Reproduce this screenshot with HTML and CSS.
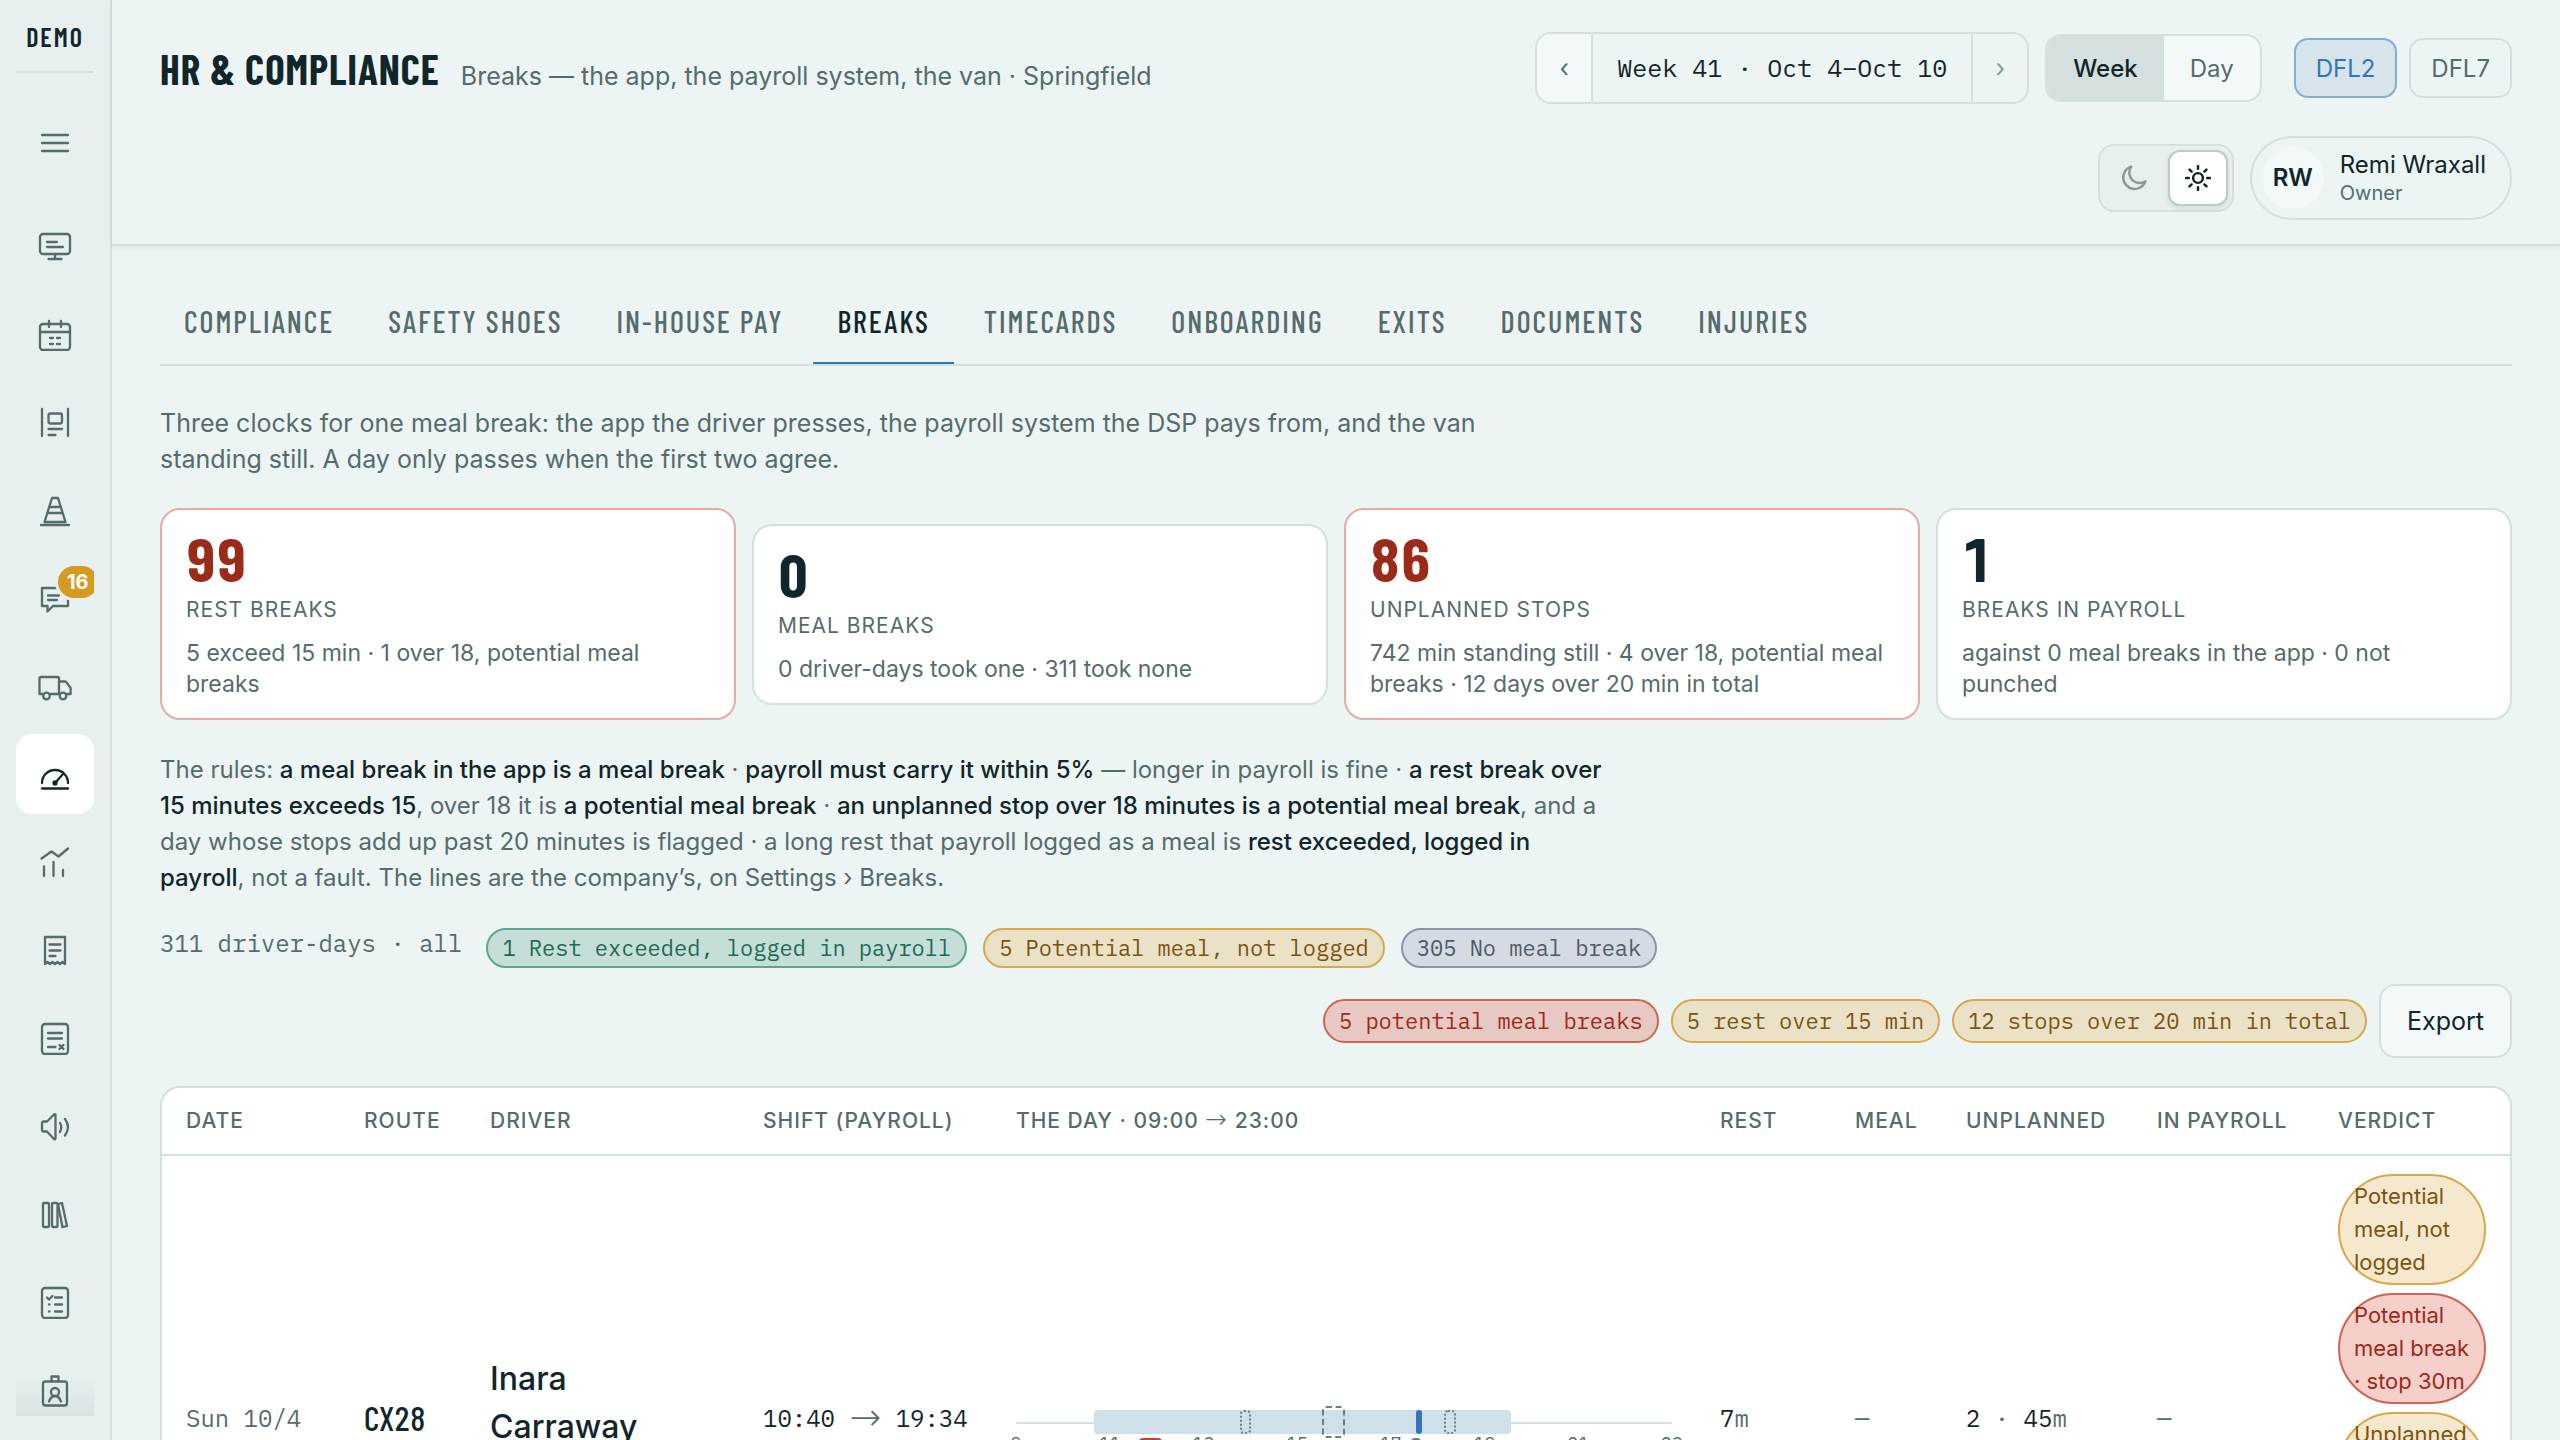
FILE: index.html
```html
<!DOCTYPE html>
<html lang="en">
<head>
  <meta charset="UTF-8">
  <title>HR &amp; Compliance - Breaks</title>
  <link rel="stylesheet" href="styles.css">
</head>
<body>
<div class="app">

  <aside class="sidebar">
    <div class="brand">DEMO</div>
    <button class="menu-btn" type="button" aria-label="Menu">
      <svg viewBox="0 0 34 34"><path d="M4 9h26M4 17h26M4 25h26"/></svg>
    </button>
    <nav class="nav">
      <a href="#" class="nav-item" aria-label="Dispatch">
        <svg viewBox="0 0 34 34"><rect x="2" y="5" width="30" height="20" rx="3"/><path d="M9 13h10M9 18h16M17 25v5M10.500 30h13"/></svg>
      </a>
      <a href="#" class="nav-item" aria-label="Schedule">
        <svg viewBox="0 0 34 34"><rect x="2" y="7" width="30" height="26" rx="3"/><path d="M2 15h30M11 4v6M23 4v6M12 21h3M19 21h3M12 27h3M19 27h3"/></svg>
      </a>
      <a href="#" class="nav-item" aria-label="Standup">
        <svg viewBox="0 0 34 34"><path d="M4 4v27M30 4v27"/><rect x="10.500" y="8.500" width="13.500" height="10" rx="2"/><path d="M10.500 24H24M10.500 30h7"/></svg>
      </a>
      <a href="#" class="nav-item" aria-label="Safety">
        <svg viewBox="0 0 34 34"><path d="M14 5h6l7.500 24h-21zM11.500 14h11M9.500 20h15M3 32h28"/></svg>
      </a>
      <a href="#" class="nav-item" aria-label="Messages, 16 unread">
        <svg viewBox="0 0 34 34"><path d="M4 7h26v18H15l-5.500 5.500V25H4zM10 14.500h11M10 19h9"/></svg>
        <span class="nav-badge">16</span>
      </a>
      <a href="#" class="nav-item" aria-label="Fleet">
        <svg viewBox="0 0 34 34"><path d="M5 25H1.500V9.500q0-1.500 1.500-1.500h16.500q1.500 0 1.500 1.500V25M11.500 25h10M21 12.500h6q1 0 1.600 1l4 5.500v6H29"/><circle cx="8.500" cy="27" r="3.300"/><circle cx="25" cy="27" r="3.300"/></svg>
      </a>
      <a href="#" class="nav-item active" aria-label="HR &amp; Compliance">
        <svg viewBox="0 0 34 34"><path d="M4 26a13 13 0 0 1 26 0M4 31.500h26M17 26l8-9"/><circle class="dot" cx="17" cy="26" r="1.500"/></svg>
      </a>
      <a href="#" class="nav-item" aria-label="Performance">
        <svg viewBox="0 0 34 34"><path d="M3.500 13.500l10-7 7 5L30 3.500M6 21.500V31M15.500 17v14M25 25v6"/></svg>
      </a>
      <a href="#" class="nav-item" aria-label="Invoices">
        <svg viewBox="0 0 34 34"><path d="M7 31V4h20v27l-2.500-2-2.500 2-2.500-2-2.500 2-2.500-2-2.500 2-2.500-2zM11.500 11.500h11M11.500 17.500h11M11.500 23h6"/></svg>
      </a>
      <a href="#" class="nav-item" aria-label="Disputes">
        <svg viewBox="0 0 34 34"><rect x="4" y="3" width="26" height="30" rx="3"/><path d="M10 12h14M10 17.500h14M10 26h7.500M21.500 24l4 4M25.500 24l-4 4"/></svg>
      </a>
      <a href="#" class="nav-item" aria-label="Announcements">
        <svg viewBox="0 0 34 34"><path d="M6 12.500h3l7-7q1.500-1 1.500 1v22.500q0 2-1.500 1l-7-7.500H6q-2 0-2-2v-6q0-2 2-2zM22 14q2.500 4 0 9M27 10q6 8 0 16.500"/></svg>
      </a>
      <a href="#" class="nav-item" aria-label="Library">
        <svg viewBox="0 0 34 34"><rect x="5" y="6" width="6" height="24" rx="1"/><rect x="14" y="6" width="5.500" height="24" rx="1"/><path d="M20 7l4-1 5 23-4.500 1.200z"/></svg>
      </a>
      <a href="#" class="nav-item" aria-label="Tasks">
        <svg viewBox="0 0 34 34"><rect x="4" y="3" width="26" height="30" rx="3"/><path d="M9 12.500l2 2 3.500-3.500M17 12.500h7M17 19.500h7M17 26.500h7M11 19.500h.5M11 26.500h.5"/></svg>
      </a>
      <a href="#" class="nav-item" aria-label="Staff">
        <svg viewBox="0 0 34 34"><rect x="5" y="8.500" width="24" height="24" rx="2.500"/><path d="M13.500 8V3.500h7V8M11 28.500q2-5.500 6-5.500t6 5.500"/><circle cx="17" cy="19" r="4"/></svg>
      </a>
    </nav>
  </aside>

  <div class="page">
    <header class="topbar">
      <div class="heading">
        <h1>HR &amp; COMPLIANCE</h1>
        <p>Breaks — the app, the payroll system, the van · Springfield</p>
      </div>
      <div class="tools">
        <div class="stepper">
          <button type="button" aria-label="Previous week">‹</button>
          <span class="stepper-label">Week 41 · Oct 4–Oct 10</span>
          <button type="button" class="faded" aria-label="Next week">›</button>
        </div>
        <div class="segment">
          <button type="button" class="on">Week</button>
          <button type="button">Day</button>
        </div>
        <div class="stations">
          <button type="button" class="on">DFL2</button>
          <button type="button">DFL7</button>
        </div>
        <div class="theme">
          <button type="button" aria-label="Dark theme">
            <svg viewBox="0 0 24 24"><path d="M9.500 1.500a10.500 10.500 0 1 0 13 13.500A9.500 9.500 0 0 1 9.500 1.500z"/></svg>
          </button>
          <button type="button" class="on" aria-label="Light theme">
            <svg viewBox="0 0 24 24"><circle cx="12" cy="12" r="4.500"/><path d="M12 1v2.500M12 20.500V23M1 12h2.500M20.500 12H23M4.200 4.200L6 6M18 18l1.800 1.800M4.200 19.800L6 18M18 6l1.800-1.800"/></svg>
          </button>
        </div>
        <button type="button" class="profile">
          <span class="avatar">RW</span>
          <span class="profile-text">
            <span class="profile-name">Remi Wraxall</span>
            <span class="profile-role">Owner</span>
          </span>
        </button>
      </div>
    </header>

    <main class="content">
      <nav class="tabs">
        <a href="#">COMPLIANCE</a>
        <a href="#">SAFETY SHOES</a>
        <a href="#">IN-HOUSE PAY</a>
        <a href="#" class="active">BREAKS</a>
        <a href="#">TIMECARDS</a>
        <a href="#">ONBOARDING</a>
        <a href="#">EXITS</a>
        <a href="#">DOCUMENTS</a>
        <a href="#">INJURIES</a>
      </nav>

      <p class="intro">Three clocks for one meal break: the app the driver presses, the payroll system the DSP pays from, and the van standing still. A day only passes when the first two agree.</p>

      <section class="cards">
        <div class="card alert">
          <div class="card-value">99</div>
          <div class="card-label">REST BREAKS</div>
          <div class="card-note">5 exceed 15 min · 1 over 18, potential meal breaks</div>
        </div>
        <div class="card">
          <div class="card-value">0</div>
          <div class="card-label">MEAL BREAKS</div>
          <div class="card-note">0 driver-days took one · 311 took none</div>
        </div>
        <div class="card alert">
          <div class="card-value">86</div>
          <div class="card-label">UNPLANNED STOPS</div>
          <div class="card-note">742 min standing still · 4 over 18, potential meal breaks · 12 days over 20 min in total</div>
        </div>
        <div class="card">
          <div class="card-value">1</div>
          <div class="card-label">BREAKS IN PAYROLL</div>
          <div class="card-note">against 0 meal breaks in the app · 0 not punched</div>
        </div>
      </section>

      <p class="rules">The rules: <b>a meal break in the app is a meal break</b> · <b>payroll must carry it within 5%</b> — longer in payroll is fine · <b>a rest break over 15 minutes exceeds 15</b>, over 18 it is <b>a potential meal break</b> · <b>an unplanned stop over 18 minutes is a potential meal break</b>, and a day whose stops add up past 20 minutes is flagged · a long rest that payroll logged as a meal is <b>rest exceeded, logged in payroll</b>, not a fault. The lines are the company’s, on Settings › Breaks.</p>

      <div class="filters">
        <span class="count">311 driver-days · all</span>
        <button type="button" class="chip green">1 Rest exceeded, logged in payroll</button>
        <button type="button" class="chip amber">5 Potential meal, not logged</button>
        <button type="button" class="chip slate">305 No meal break</button>
      </div>
      <div class="flags">
        <span class="chip tall red">5 potential meal breaks</span>
        <span class="chip tall amber">5 rest over 15 min</span>
        <span class="chip tall amber">12 stops over 20 min in total</span>
        <button type="button" class="export">Export</button>
      </div>

      <div class="table-wrap">
        <table>
          <colgroup>
            <col class="c-date"><col class="c-route"><col class="c-driver"><col class="c-shift"><col>
            <col class="c-rest"><col class="c-meal"><col class="c-unplanned"><col class="c-payroll"><col class="c-verdict">
          </colgroup>
          <thead>
            <tr>
              <th>DATE</th>
              <th>ROUTE</th>
              <th>DRIVER</th>
              <th>SHIFT (PAYROLL)</th>
              <th>THE DAY · 09:00 <span class="arrow">→</span> 23:00</th>
              <th>REST</th>
              <th>MEAL</th>
              <th>UNPLANNED</th>
              <th>IN PAYROLL</th>
              <th>VERDICT</th>
            </tr>
          </thead>
          <tbody>
            <tr>
              <td class="mono muted">Sun 10/4</td>
              <td class="route">CX28</td>
              <td class="driver"><div>Inara Carraway</div></td>
              <td class="mono shift">10:40 <span class="arrow">→</span> 19:34</td>
              <td>
                <div class="day">
                  <div class="axis"></div>
                  <div class="worked" style="left: 11.9%; width: 63.6%"></div>
                  <div class="stop" style="left: 34.2%; width: 1.7%"></div>
                  <div class="stop long" style="left: 46.7%; width: 3.5%"></div>
                  <div class="rest" style="left: 61%; width: 0.9%"></div>
                  <div class="stop" style="left: 65.3%; width: 1.7%"></div>
                  <div class="mark bad" style="left: 18.8%; width: 3.4%"></div>
                  <div class="mark" style="left: 60.2%; width: 1.6%"></div>
                  <div class="hours">
                    <span>9</span><span>11</span><span>13</span><span>15</span><span>17</span><span>19</span><span>21</span><span>23</span>
                  </div>
                </div>
              </td>
              <td class="mono">7<span class="muted">m</span></td>
              <td class="mono muted">—</td>
              <td class="mono">2 <span class="muted">·</span> 45<span class="muted">m</span></td>
              <td class="mono muted">—</td>
              <td>
                <div class="verdicts">
                  <span class="verdict amber">Potential meal, not logged</span>
                  <span class="verdict red">Potential meal break · stop 30m</span>
                  <span class="verdict amber">Unplanned over 20 min</span>
                </div>
              </td>
            </tr>
          </tbody>
        </table>
      </div>
    </main>
  </div>
</div>
</body>
</html>
```
FILE: styles.css
```css
:root {
  --bg: #ecf4f4;
  --side: #e7efef;
  --raised: #f3f8f9;
  --line: #d3e0df;
  --ink: #10262a;
  --muted: #566b6d;
  --blue: #2f76b7;
  --red: #9c2a18;
  --sans: Inter, "Noto Sans", sans-serif;
  --cond: "Barlow Condensed", "Liberation Sans Narrow", "Roboto Condensed", sans-serif;
  --mono: "IBM Plex Mono", "Liberation Mono", monospace;
}

* {
  box-sizing: border-box;
}

body {
  margin: 0;
  background: var(--bg);
  color: var(--ink);
  font-family: var(--sans);
  font-size: 25px;
}

h1, p {
  margin: 0;
}

button {
  font: inherit;
  color: inherit;
  background: none;
  border: none;
  padding: 0;
  cursor: pointer;
}

a {
  color: inherit;
  text-decoration: none;
}

svg {
  display: block;
  fill: none;
  stroke: currentColor;
  stroke-width: 2.3;
  stroke-linecap: round;
  stroke-linejoin: round;
}

.app {
  display: flex;
  height: 100vh;
  overflow: hidden;
}

/* sidebar */
.sidebar {
  flex: none;
  display: flex;
  flex-direction: column;
  width: 112px;
  padding: 0 16px 24px;
  background: var(--side);
  border-right: 2px solid var(--line);
  color: var(--muted);
}

.brand {
  flex: none;
  height: 73px;
  border-bottom: 2px solid var(--line);
  color: var(--ink);
  font-family: var(--cond);
  font-size: 26px;
  font-weight: 600;
  letter-spacing: 2px;
  line-height: 73px;
  text-align: center;
}

.menu-btn {
  flex: none;
  display: flex;
  align-items: center;
  justify-content: center;
  height: 80px;
  margin: 30px 0 23px;
}

.menu-btn svg,
.nav-item svg {
  width: 34px;
  height: 34px;
}

.nav {
  position: relative;
  flex: 1;
  display: flex;
  flex-direction: column;
  gap: 8px;
  min-height: 0;
  overflow: hidden;
}

/* fade that shows there is more below */
.nav::after {
  content: "";
  position: absolute;
  left: 0;
  right: 0;
  bottom: 0;
  height: 40px;
  background: linear-gradient(rgba(16, 38, 42, 0), rgba(16, 38, 42, 0.06));
}

.nav-item {
  position: relative;
  flex: none;
  display: flex;
  align-items: center;
  justify-content: center;
  height: 80px;
  border-radius: 16px;
}

.nav-item.active {
  background: #fff;
  color: var(--ink);
}

.nav-item .dot {
  fill: currentColor;
}

.nav-badge {
  position: absolute;
  top: 8px;
  left: 42px;
  padding: 0 9px;
  border-radius: 16px;
  background: #d69a22;
  box-shadow: 0 0 0 3px var(--side);
  color: #fff;
  font-size: 20px;
  font-weight: bold;
  line-height: 32px;
}

/* top bar */
.page {
  flex: 1;
  min-width: 0;
}

.topbar {
  display: flex;
  justify-content: space-between;
  align-items: flex-start;
  padding: 32px 48px 24px;
  border-bottom: 2px solid var(--line);
  box-shadow: 0 2px 6px rgba(16, 38, 42, 0.06);
}

.heading {
  display: flex;
  align-items: baseline;
  gap: 21px;
  padding-top: 13px;
}

.heading h1 {
  font-family: var(--cond);
  font-size: 41px;
  line-height: 48px;
  letter-spacing: 1px;
}

.heading p {
  color: var(--muted);
}

.tools {
  display: flex;
  flex-wrap: wrap;
  align-items: center;
  justify-content: flex-end;
  gap: 32px 16px;
  width: 1000px;
}

.stepper {
  display: flex;
  height: 72px;
  border: 2px solid var(--line);
  border-radius: 16px;
  overflow: hidden;
}

.stepper button {
  width: 54px;
  background: var(--raised);
  color: var(--muted);
}

.stepper .faded {
  background: none;
  color: #8a9a9b;
}

.stepper-label {
  padding: 0 24px;
  border-left: 2px solid var(--line);
  border-right: 2px solid var(--line);
  font-family: var(--mono);
  line-height: 67px;
}

.segment {
  display: flex;
  height: 68px;
  border: 2px solid var(--line);
  border-radius: 16px;
  background: var(--raised);
  color: var(--muted);
  font-size: 24px;
  overflow: hidden;
}

.segment button {
  padding: 0 26px;
}

.segment .on {
  background: var(--line);
  color: var(--ink);
  font-weight: 500;
}

.stations {
  display: flex;
  gap: 12px;
  margin-left: 16px;
}

.stations button {
  height: 60px;
  padding: 0 20px;
  border: 2px solid var(--line);
  border-radius: 14px;
  color: var(--muted);
  font-size: 24px;
}

.stations .on {
  border-color: #86acd0;
  background: #d8e4eb;
  color: var(--blue);
}

.theme {
  display: flex;
  gap: 4px;
  padding: 4px;
  border: 2px solid var(--line);
  border-radius: 16px;
  background: var(--side);
}

.theme button {
  display: flex;
  align-items: center;
  justify-content: center;
  width: 60px;
  height: 56px;
  border: 2px solid transparent;
  border-radius: 12px;
  color: #8a9a9b;
}

.theme .on {
  border-color: #b7cccb;
  background: #fff;
  box-shadow: 0 2px 4px rgba(16, 38, 42, 0.1);
  color: var(--ink);
}

.theme svg {
  width: 26px;
  height: 26px;
}

.profile {
  display: flex;
  align-items: center;
  gap: 16px;
  height: 84px;
  padding: 0 24px 0 10px;
  border: 2px solid var(--line);
  border-radius: 42px;
  text-align: left;
}

.avatar {
  width: 62px;
  border-radius: 50%;
  background: var(--raised);
  font-size: 24px;
  font-weight: 600;
  line-height: 62px;
  text-align: center;
}

.profile-text {
  display: flex;
  flex-direction: column;
}

.profile-name {
  font-size: 24px;
  line-height: 30px;
}

.profile-role {
  color: var(--muted);
  font-size: 20px;
  line-height: 26px;
}

/* content */
.content {
  padding: 32px 48px;
}

.tabs {
  display: flex;
  gap: 6px;
  border-bottom: 2px solid var(--line);
  color: var(--muted);
  font-family: var(--cond);
  font-size: 30px;
  font-weight: 500;
  letter-spacing: 2px;
}

.tabs a {
  padding: 22px 24px 20px;
  border-bottom: 2px solid transparent;
  line-height: 42px;
}

.tabs .active {
  border-color: var(--blue);
  color: var(--ink);
}

.intro {
  max-width: 1340px;
  margin-top: 39px;
  color: var(--muted);
  line-height: 36px;
}

.cards {
  display: grid;
  grid-template-columns: repeat(4, 1fr);
  align-items: center;
  gap: 16px;
  margin-top: 31px;
}

.card {
  padding: 18px 24px;
  border: 2px solid var(--line);
  border-radius: 20px;
  background: #fff;
  color: var(--muted);
}

.card.alert {
  border-color: #e8aaa2;
}

.card-value {
  margin-bottom: 4px;
  color: var(--ink);
  font-family: var(--cond);
  font-size: 61px;
  font-variant-numeric: tabular-nums;
  font-weight: bold;
  line-height: 60px;
}

.alert .card-value {
  color: var(--red);
}

.card-label {
  font-size: 21px;
  letter-spacing: 1px;
  line-height: 36px;
}

.card-note {
  margin-top: 10px;
  font-size: 23px;
  line-height: 31px;
}

.rules {
  max-width: 1456px;
  margin-top: 32px;
  color: var(--muted);
  font-size: 24px;
  line-height: 36px;
}

.rules b {
  color: var(--ink);
  font-weight: 500;
}

.filters {
  display: flex;
  gap: 16px;
  margin-top: 32px;
}

.count {
  margin-right: 8px;
  color: var(--muted);
  font-family: var(--mono);
  font-size: 24px;
  line-height: 30px;
}

.flags {
  display: flex;
  align-items: center;
  justify-content: flex-end;
  gap: 12px;
  margin-top: 16px;
}

.chip {
  padding: 0 14px;
  border: 2px solid;
  border-radius: 22px;
  font-family: var(--mono);
  font-size: 22px;
  line-height: 36px;
}

.chip.tall {
  line-height: 40px;
}

.green {
  border-color: #5fa58d;
  background: #c6ded8;
  color: #1d6b52;
}

.amber {
  border-color: #d8a94c;
  background: #ebe1c6;
  color: #7a5410;
}

.slate {
  border-color: #8d95a5;
  background: #d5dbe2;
  color: #4f5a6b;
}

.red {
  border-color: #cf6354;
  background: #e8c8c3;
  color: var(--red);
}

.export {
  height: 74px;
  padding: 0 26px;
  border: 2px solid var(--line);
  border-radius: 16px;
  background: var(--raised);
}

/* table */
.table-wrap {
  margin-top: 28px;
  border: 2px solid var(--line);
  border-radius: 20px;
  background: #fff;
  overflow: hidden;
}

table {
  width: 100%;
  table-layout: fixed;
  border-collapse: separate;
  border-spacing: 0;
}

.c-date { width: 178px; }
.c-route { width: 126px; }
.c-driver { width: 273px; }
.c-shift { width: 253px; }
.c-rest { width: 135px; }
.c-meal { width: 111px; }
.c-unplanned { width: 191px; }
.c-payroll { width: 181px; }
.c-verdict { width: 196px; }

th {
  height: 68px;
  padding: 0 24px;
  border-bottom: 2px solid var(--line);
  color: var(--muted);
  font-size: 21px;
  font-weight: 500;
  letter-spacing: 1px;
  line-height: 30px;
  text-align: left;
  white-space: nowrap;
}

td {
  height: 524px;
  padding: 18px 24px;
  white-space: nowrap;
}

.mono {
  font-family: var(--mono);
  font-size: 24px;
}

.muted {
  color: var(--muted);
}

.route {
  padding-bottom: 20px;
  font-family: var(--cond);
  font-size: 34px;
  font-variant-numeric: tabular-nums;
  font-weight: 500;
}

.driver {
  padding-bottom: 48px;
  font-size: 32px;
  font-weight: 500;
  line-height: 48px;
  white-space: normal;
}

.driver div {
  width: min-content;
}

.arrow {
  color: var(--muted);
  font-family: "DejaVu Sans", sans-serif;
  font-size: 26px;
  font-weight: 200;
  line-height: 24px;
}

.shift .arrow {
  font-size: 38px;
  vertical-align: -3px;
}

.day {
  position: relative;
  height: 60px;
}

.day > div {
  position: absolute;
}

.axis {
  top: 34px;
  width: 100%;
  height: 2px;
  background: var(--line);
}

.worked {
  top: 22px;
  height: 24px;
  border-radius: 4px;
  background: #cfe0ea;
}

.stop {
  top: 22px;
  height: 24px;
  border: 2px dotted #6d7f86;
  border-radius: 4px;
}

.stop.long {
  top: 18px;
  height: 32px;
  border-style: dashed;
}

.rest {
  top: 22px;
  height: 24px;
  border-radius: 3px;
  background: var(--blue);
}

.mark {
  top: 50px;
  height: 8px;
  border-radius: 4px;
  background: #6b7a8a;
}

.mark.bad {
  background: #c0452f;
}

.hours {
  top: 44px;
  left: -20px;
  right: -20px;
  display: flex;
  justify-content: space-between;
  color: var(--muted);
  font-family: var(--mono);
  font-size: 18px;
  line-height: 24px;
}

.hours span {
  width: 40px;
  text-align: center;
}

.verdicts {
  display: flex;
  flex-direction: column;
  gap: 8px;
  height: 488px;
  white-space: normal;
}

.verdict {
  padding: 4px 14px;
  border: 2px solid;
  border-radius: 56px;
  font-size: 22px;
  line-height: 33px;
}

.verdict.amber {
  border-color: #d8a94c;
  background: #f6e8cd;
}

.verdict.red {
  border-color: #cf6354;
  background: #f5cfca;
}
```
